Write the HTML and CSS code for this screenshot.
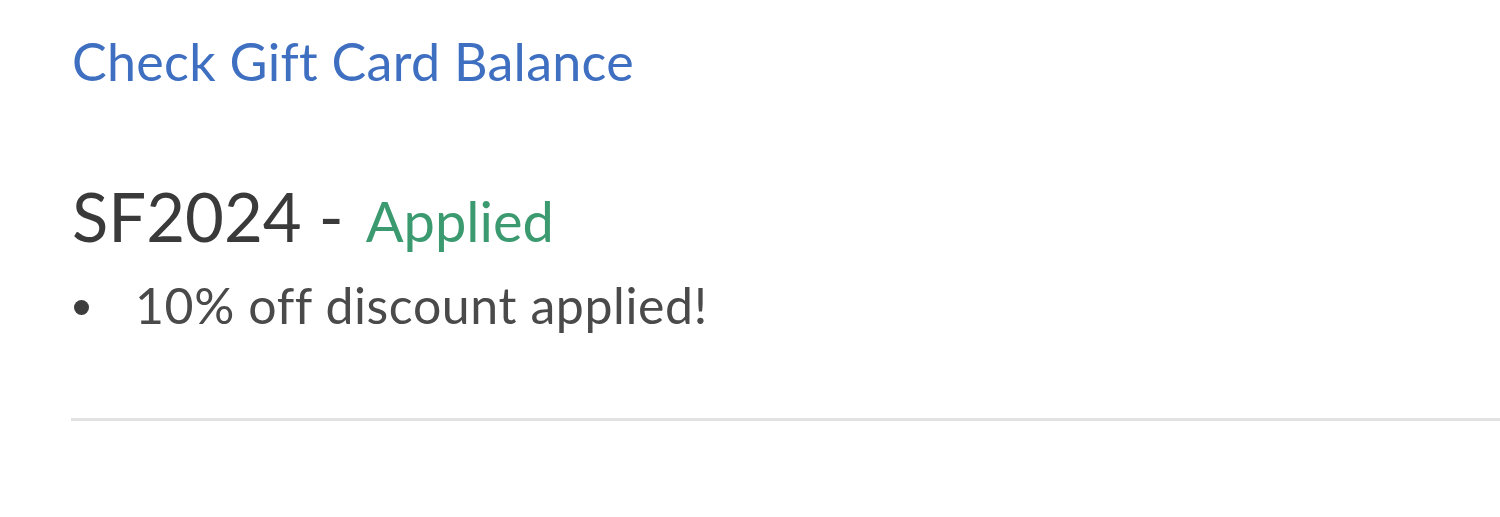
FILE: index.html
```html
<!DOCTYPE html>
<html>
<head>
<meta charset="utf-8">
<link rel="stylesheet" href="styles.css">
</head>
<body>
<div class="panel">
  <a class="gift-link" href="#">Check Gift Card Balance</a>
  <div class="promo">
    <div class="promo-title"><span class="code">SF2024 -</span><span class="status">Applied</span></div>
    <ul class="promo-list">
      <li>10% off discount applied!</li>
    </ul>
  </div>
  <hr class="divider">
</div>
</body>
</html>
```
FILE: styles.css
```css
html, body {
  margin: 0;
  padding: 0;
  background: #ffffff;
}
body {
  font-family: "Lato", "Open Sans", sans-serif;
  color: #444444;
}
.panel {
  padding: 28px 0 0 72px;
  display: flex;
  flex-direction: column;
}
.gift-link {
  color: #3f6fc0;
  text-decoration: none;
  font-size: 52px;
  line-height: 66px;
  letter-spacing: 0.3px;
  align-self: flex-start;
}
.promo {
  margin-top: 100px;
}
.promo-title {
  line-height: 80px;
  margin-top: -18px;
  display: flex;
  align-items: baseline;
}
.code {
  font-size: 67px;
  color: #3a3a3a;
}
.status {
  font-size: 56px;
  color: #3c9a70;
  margin-left: 22px;
}
.promo-list {
  margin: 12px 0 0;
  padding: 0;
  list-style: none;
  font-size: 50px;
  line-height: 64px;
  letter-spacing: 0.6px;
  color: #4a4a4a;
}
.promo-list li {
  display: flex;
  align-items: center;
}
.promo-list li::before {
  content: "";
  width: 15px;
  height: 15px;
  border-radius: 50%;
  background: #3d3d3d;
  margin: 4px 46px 0 2px;
  flex: none;
}
.divider {
  border: 0;
  border-top: 3px solid #e2e2e2;
  margin: 81px 0 0 -1px;
}
```
